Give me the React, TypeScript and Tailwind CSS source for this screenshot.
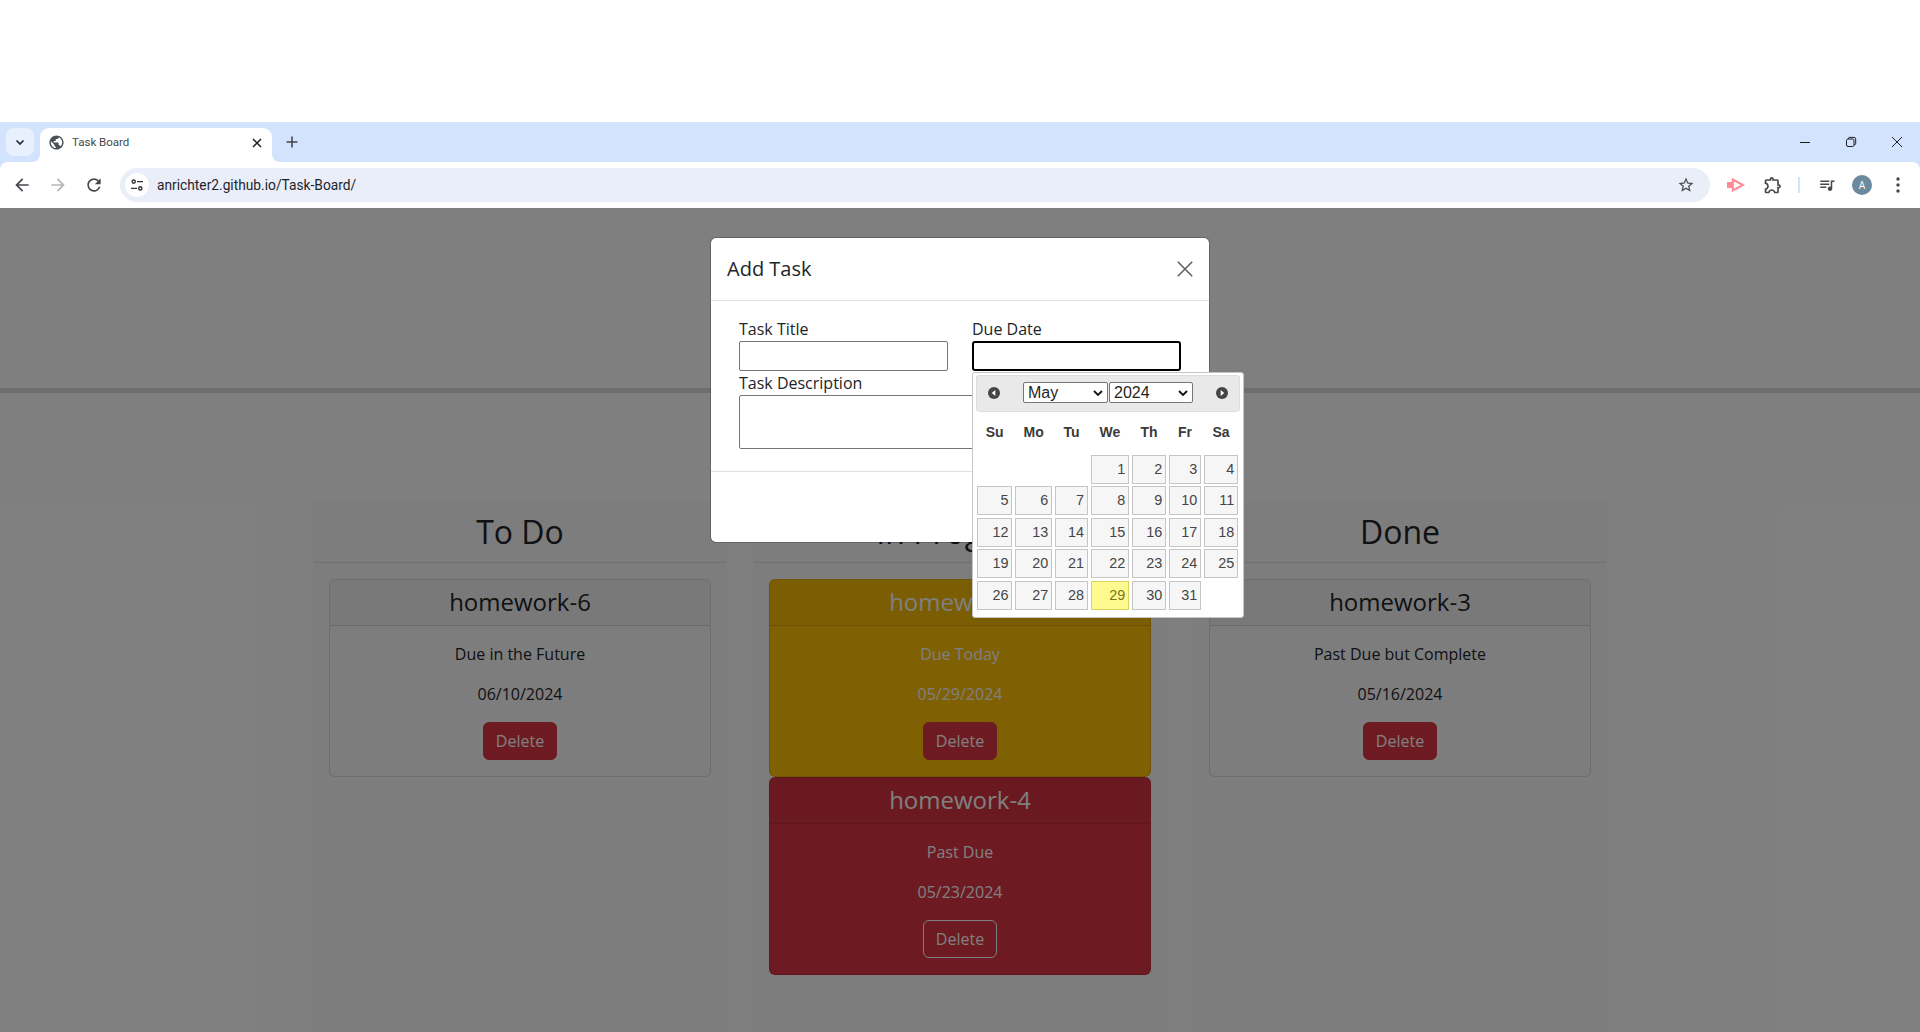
import { FunctionComponent, ReactNode } from "react";

const Icon: FunctionComponent<{ d: string; className?: string }> = ({ d, className }) => (
  <svg viewBox="0 0 24 24" fill="currentColor" className={className}>
    <path d={d} />
  </svg>
);

const paths = {
  back: "M20 11H7.83l5.59-5.59L12 4l-8 8 8 8 1.41-1.41L7.83 13H20v-2z",
  forward: "M12 4l-1.41 1.41L16.17 11H4v2h12.17l-5.58 5.59L12 20l8-8z",
  reload:
    "M17.65 6.35A7.958 7.958 0 0 0 12 4c-4.42 0-7.99 3.58-7.99 8s3.57 8 7.99 8c3.73 0 6.84-2.55 7.73-6h-2.08A5.99 5.99 0 0 1 12 18c-3.31 0-6-2.69-6-6s2.69-6 6-6c1.66 0 3.14.69 4.22 1.78L13 11h7V4l-2.35 2.35z",
  star: "M22 9.24l-7.19-.62L12 2 9.19 8.63 2 9.24l5.46 4.73L5.82 21 12 17.27 18.18 21l-1.63-7.03L22 9.24zM12 15.4l-3.76 2.27 1-4.28-3.32-2.88 4.38-.38L12 6.1l1.71 4.04 4.38.38-3.32 2.88 1 4.28L12 15.4z",
  puzzle:
    "M10.5 4.5c.28 0 .5.22.5.5v2h6v6h2c.28 0 .5.22.5.5s-.22.5-.5.5h-2v6h-2.12c-.68-1.75-2.39-3-4.38-3s-3.7 1.25-4.38 3H4v-2.12c1.75-.68 3-2.39 3-4.38 0-1.99-1.24-3.7-2.99-4.38L4 7h6V5c0-.28.22-.5.5-.5m0-2C9.12 2.5 8 3.62 8 5H4c-1.1 0-1.99.9-1.99 2v3.8h.29c1.49 0 2.7 1.21 2.7 2.7s-1.21 2.7-2.7 2.7H2V20c0 1.1.9 2 2 2h3.8v-.3c0-1.49 1.21-2.7 2.7-2.7s2.7 1.21 2.7 2.7v.3H17c1.1 0 2-.9 2-2v-4c1.38 0 2.5-1.12 2.5-2.5S20.38 11 19 11V7c0-1.1-.9-2-2-2h-4c0-1.38-1.12-2.5-2.5-2.5z",
  queue:
    "M15 6H3v2h12V6zm0 4H3v2h12v-2zM3 16h8v-2H3v2zM17 6v8.18c-.31-.11-.65-.18-1-.18-1.66 0-3 1.34-3 3s1.34 3 3 3 3-1.34 3-3V8h3V6h-5z",
  globe:
    "M12 2C6.48 2 2 6.48 2 12s4.48 10 10 10 10-4.48 10-10S17.52 2 12 2zm-1 17.93c-3.95-.49-7-3.85-7-7.93 0-.62.08-1.21.21-1.79L9 15v1c0 1.1.9 2 2 2v1.93zm6.9-2.54c-.26-.81-1-1.39-1.9-1.39h-1v-3c0-.55-.45-1-1-1H8v-2h2c.55 0 1-.45 1-1V7h2c1.1 0 2-.9 2-2v-.41c2.93 1.19 5 4.06 5 7.41 0 2.08-.8 3.97-2.1 5.39z",
};

const Browser = () => (
  <div className="bg-[#d3e3fd] text-[#45494e] font-['Roboto',sans-serif]">
    <div className="h-[40px] flex items-end pl-[6px]">
      <div className="w-[28px] h-[28px] mb-[6px] rounded-lg bg-[#e9f0fd] flex items-center justify-center">
        <svg viewBox="0 0 12 12" className="w-[12px] h-[12px]" fill="none" stroke="#1f2937" strokeWidth="1.7">
          <path d="M2.5 4.5 6 8l3.5-3.5" />
        </svg>
      </div>
      <div className="relative ml-[6px] w-[232px] h-[34px] bg-white rounded-t-[9px] flex items-center pl-[8px] pr-[9px] pb-[5px]">
        <span className="absolute -left-[8px] bottom-0 w-[8px] h-[8px] bg-white">
          <span className="block w-full h-full rounded-br-[8px] bg-[#d3e3fd]" />
        </span>
        <span className="absolute -right-[8px] bottom-0 w-[8px] h-[8px] bg-white">
          <span className="block w-full h-full rounded-bl-[8px] bg-[#d3e3fd]" />
        </span>
        <Icon d={paths.globe} className="w-[17px] h-[17px] text-[#4b5055]" />
        <span className="ml-[7px] text-[11.5px] text-[#45484c] flex-1">Task Board</span>
        <svg viewBox="0 0 12 12" className="w-[12px] h-[12px]" fill="none" stroke="#1f1f1f" strokeWidth="1.5">
          <path d="M2 2l8 8M10 2l-8 8" />
        </svg>
      </div>
      <svg viewBox="0 0 14 14" className="w-[14px] h-[14px] ml-[13px] mb-[13px]" fill="none" stroke="#444746" strokeWidth="1.6">
        <path d="M7 1.5v11M1.5 7h11" />
      </svg>
      <div className="ml-auto flex items-center h-[40px] self-start pr-[17px] gap-[34px] text-[#1f1f1f]">
        <svg viewBox="0 0 12 12" className="w-[12px] h-[12px]" fill="none" stroke="currentColor" strokeWidth="1">
          <path d="M1 6.5h10" />
        </svg>
        <svg viewBox="0 0 12 12" className="w-[12px] h-[12px]" fill="none" stroke="currentColor" strokeWidth="1">
          <rect x="1.5" y="3" width="7.5" height="7.5" rx="1.5" />
          <path d="M3.5 3V2.4a1 1 0 0 1 1-1h4.7a1.5 1.5 0 0 1 1.5 1.5v4.7a1 1 0 0 1-1 1H9" />
        </svg>
        <svg viewBox="0 0 12 12" className="w-[12px] h-[12px]" fill="none" stroke="currentColor" strokeWidth="1">
          <path d="M1 1l10 10M11 1 1 11" />
        </svg>
      </div>
    </div>
    <div className="h-[46px] bg-white rounded-t-[8px] flex items-center pl-[12px] pr-[11px]">
      <Icon d={paths.back} className="w-[20px] h-[20px] text-[#45494e]" />
      <Icon d={paths.forward} className="w-[20px] h-[20px] ml-[16px] text-[#b2b5b9]" />
      <Icon d={paths.reload} className="w-[20px] h-[20px] ml-[16px] text-[#45494e]" />
      <div className="ml-[16px] w-[1590px] h-[34px] rounded-full bg-[#e9eef8] flex items-center pl-[5px] pr-[15px]">
        <div className="w-[24px] h-[24px] rounded-full bg-white flex items-center justify-center">
          <svg viewBox="0 0 14 14" className="w-[14px] h-[14px]" fill="none" stroke="#2f3337" strokeWidth="1.4">
            <circle cx="3.7" cy="3.6" r="1.6" />
            <path d="M7 3.6h6M1 10.4h6" />
            <circle cx="10.3" cy="10.4" r="1.6" />
          </svg>
        </div>
        <span className="ml-[8px] text-[13.75px] text-[#1f1f2e] flex-1">anrichter2.github.io/Task-Board/</span>
        <Icon d={paths.star} className="w-[18px] h-[18px] text-[#45494e]" />
      </div>
      <svg viewBox="0 0 18 14" className="w-[18px] h-[14px] ml-[17px]">
        <rect x="0" y="4" width="5" height="6" fill="#ff8b94" />
        <path d="M5.8 1.5 16 7 5.8 12.5z" fill="none" stroke="#ff8b94" strokeWidth="2" />
      </svg>
      <Icon d={paths.puzzle} className="w-[20px] h-[20px] ml-[18px] text-[#45494e]" />
      <div className="w-[2px] h-[16px] ml-[15px] bg-[#d3e3fd]" />
      <Icon d={paths.queue} className="w-[18px] h-[18px] ml-[18px] text-[#45494e]" />
      <div className="w-[20px] h-[20px] ml-[16px] rounded-full bg-[#6b8a9e] text-white text-[10px] flex items-center justify-center">
        A
      </div>
      <svg viewBox="0 0 4 16" className="w-[4px] h-[16px] ml-[24px] text-[#45494e]" fill="currentColor">
        <circle cx="2" cy="2" r="1.7" />
        <circle cx="2" cy="8" r="1.7" />
        <circle cx="2" cy="14" r="1.7" />
      </svg>
    </div>
  </div>
);

const TaskCard: FunctionComponent<{
  title: string;
  text: string;
  date: string;
  tone?: "plain" | "warning" | "danger";
}> = ({ title, text, date, tone = "plain" }) => {
  const box =
    tone === "warning"
      ? "bg-[#ffc107] text-white border-black/[.125]"
      : tone === "danger"
        ? "bg-[#dc3545] text-white border-black/[.125]"
        : "bg-[#fbfbfb] text-[#212529] border-black/[.125]";
  const button = tone === "danger" ? "border-white" : "border-[#dc3545] bg-[#dc3545]";
  return (
    <div className={`border rounded-[6px] text-center ${box}`}>
      <h3 className="h-[46px] border-b border-black/[.125] bg-black/[.03] text-[24px] leading-[43px] rounded-t-[5px]">
        {title}
      </h3>
      <div className="p-[16px]">
        <p className="text-[16px] leading-[24px] mb-[16px]">{text}</p>
        <p className="text-[16px] leading-[24px] mb-[16px]">{date}</p>
        <button className={`h-[38px] w-[74px] border rounded-[6px] text-white text-[16px] ${button}`}>Delete</button>
      </div>
    </div>
  );
};

const Lane: FunctionComponent<{ title: string; children: ReactNode }> = ({ title, children }) => (
  <section className="w-[414px] bg-[#fafafa] border-x border-t border-black/[.015] flex flex-col">
    <h2 className="h-[59px] border-b border-black/[.1] text-center text-[32px] leading-[56px] text-[#212529]">
      {title}
    </h2>
    <div className="px-[15px] py-[16px] flex flex-col">{children}</div>
  </section>
);

const Board = () => (
  <div className="flex-1 bg-white flex flex-col font-['Open_Sans',sans-serif]">
    <header className="h-[185px] border-b-[5px] border-[#dcdcdc]" />
    <div className="flex-1 flex gap-[26px] pl-[313px] pt-[110px]">
      <Lane title="To Do">
        <TaskCard title="homework-6" text="Due in the Future" date="06/10/2024" />
      </Lane>
      <Lane title="In Progress">
        <TaskCard title="homework-5" text="Due Today" date="05/29/2024" tone="warning" />
        <TaskCard title="homework-4" text="Past Due" date="05/23/2024" tone="danger" />
      </Lane>
      <Lane title="Done">
        <TaskCard title="homework-3" text="Past Due but Complete" date="05/16/2024" />
      </Lane>
    </div>
  </div>
);

const Modal = () => (
  <div className="absolute left-[710px] top-[29px] w-[500px] h-[306px] bg-white bg-clip-padding rounded-[6px] border border-black/20 flex flex-col text-[#212529] font-['Open_Sans',sans-serif]">
    <div className="h-[63px] shrink-0 border-b border-[#dee2e6] flex items-center justify-between pl-[16px] pr-[16px]">
      <h5 className="text-[20px]">Add Task</h5>
      <svg viewBox="0 0 16 16" className="w-[16px] h-[16px]" fill="none" stroke="#5f6163" strokeWidth="1.6">
        <path d="M.8.8l14.4 14.4M15.2.8.8 15.2" />
      </svg>
    </div>
    <div className="h-[171px] shrink-0 border-b border-[#dee2e6] pt-[16px] pl-[28px] pr-[28px]">
      <div className="grid grid-cols-[209px_209px] gap-x-[24px]">
        <div>
          <label className="block text-[16px] leading-[24px]">Task Title</label>
          <input className="block w-full h-[30px] border border-[#767676] rounded-[2px]" />
        </div>
        <div>
          <label className="block text-[16px] leading-[24px]">Due Date</label>
          <input className="block w-full h-[30px] border-2 border-black rounded-[3px]" />
        </div>
      </div>
      <label className="block text-[16px] leading-[24px]">Task Description</label>
      <textarea className="block w-[300px] h-[54px] border border-[#767676] rounded-[2px] resize-none" />
    </div>
  </div>
);

const columnClasses = "grid grid-cols-[35.4px_37.4px_33px_38.7px_34.4px_32.4px_34.4px] gap-x-[2.6px]";
const weekdays = ["Su", "Mo", "Tu", "We", "Th", "Fr", "Sa"];
const days = Array.from({ length: 31 }, (_, i) => i + 1);

const CircleArrow: FunctionComponent<{ dir: "left" | "right" }> = ({ dir }) => (
  <svg viewBox="0 0 12 12" className="w-[12px] h-[12px]">
    <circle cx="6" cy="6" r="6" fill="#454545" />
    <path d={dir === "left" ? "M7.3 3v6L3.8 6z" : "M4.7 3v6L8.2 6z"} fill="#fff" />
  </svg>
);

const MonthSelect: FunctionComponent<{ value: string; className: string }> = ({ value, className }) => (
  <div className={`h-[21px] bg-white border border-[#767676] rounded-[2px] flex items-center justify-between pl-[4px] pr-[4px] text-[16px] text-[#1f1f1f] ${className}`}>
    {value}
    <svg viewBox="0 0 10 6" className="w-[10px] h-[6px]" fill="none" stroke="#111" strokeWidth="1.8">
      <path d="M1 1l4 4 4-4" />
    </svg>
  </div>
);

const Calendar = () => (
  <div className="absolute left-[972px] top-[164px] w-[272px] h-[246px] bg-white border border-[#c5c5c5] rounded-[3px] px-[3px] pt-[2px] font-['Liberation_Sans',sans-serif]">
    <div className="h-[37px] border border-[#dddddd] bg-[#e9e9e9] rounded-[3px] flex items-center pl-[11px] pr-[11px] pb-[2px] text-[#333333]">
      <CircleArrow dir="left" />
      <div className="flex flex-1 justify-center gap-[1px]">
        <MonthSelect value="May" className="w-[85px]" />
        <MonthSelect value="2024" className="w-[84px]" />
      </div>
      <CircleArrow dir="right" />
    </div>
    <div className={`${columnClasses} ml-[1px] mt-[2px] mb-[5px] h-[36px] items-center text-[14px] font-bold text-[#3a3a3a] text-center`}>
      {weekdays.map((day) => (
        <span key={day}>{day}</span>
      ))}
    </div>
    <div className={`${columnClasses} ml-[1px] gap-y-[2.4px]`}>
      {days.map((day) => (
        <div
          key={day}
          style={day === 1 ? { gridColumnStart: 4 } : undefined}
          className={
            day === 29
              ? "h-[29px] border border-[#dad55e] bg-[#fffa90] text-[#777620] text-right text-[14.4px] leading-[26px] pr-[3px]"
              : "h-[29px] border border-[#c5c5c5] bg-[#f6f6f6] text-[#454545] text-right text-[14.4px] leading-[26px] pr-[3px]"
          }
        >
          {day}
        </div>
      ))}
    </div>
  </div>
);

export default function App() {
  return (
    <div className="h-[1032px] w-[1920px] overflow-hidden flex flex-col bg-white">
      <div className="h-[122px] shrink-0" />
      <Browser />
      <main className="relative flex-1 flex flex-col overflow-hidden">
        <Board />
        <div className="absolute inset-0 bg-black/50" />
        <Modal />
        <Calendar />
      </main>
    </div>
  );
}
